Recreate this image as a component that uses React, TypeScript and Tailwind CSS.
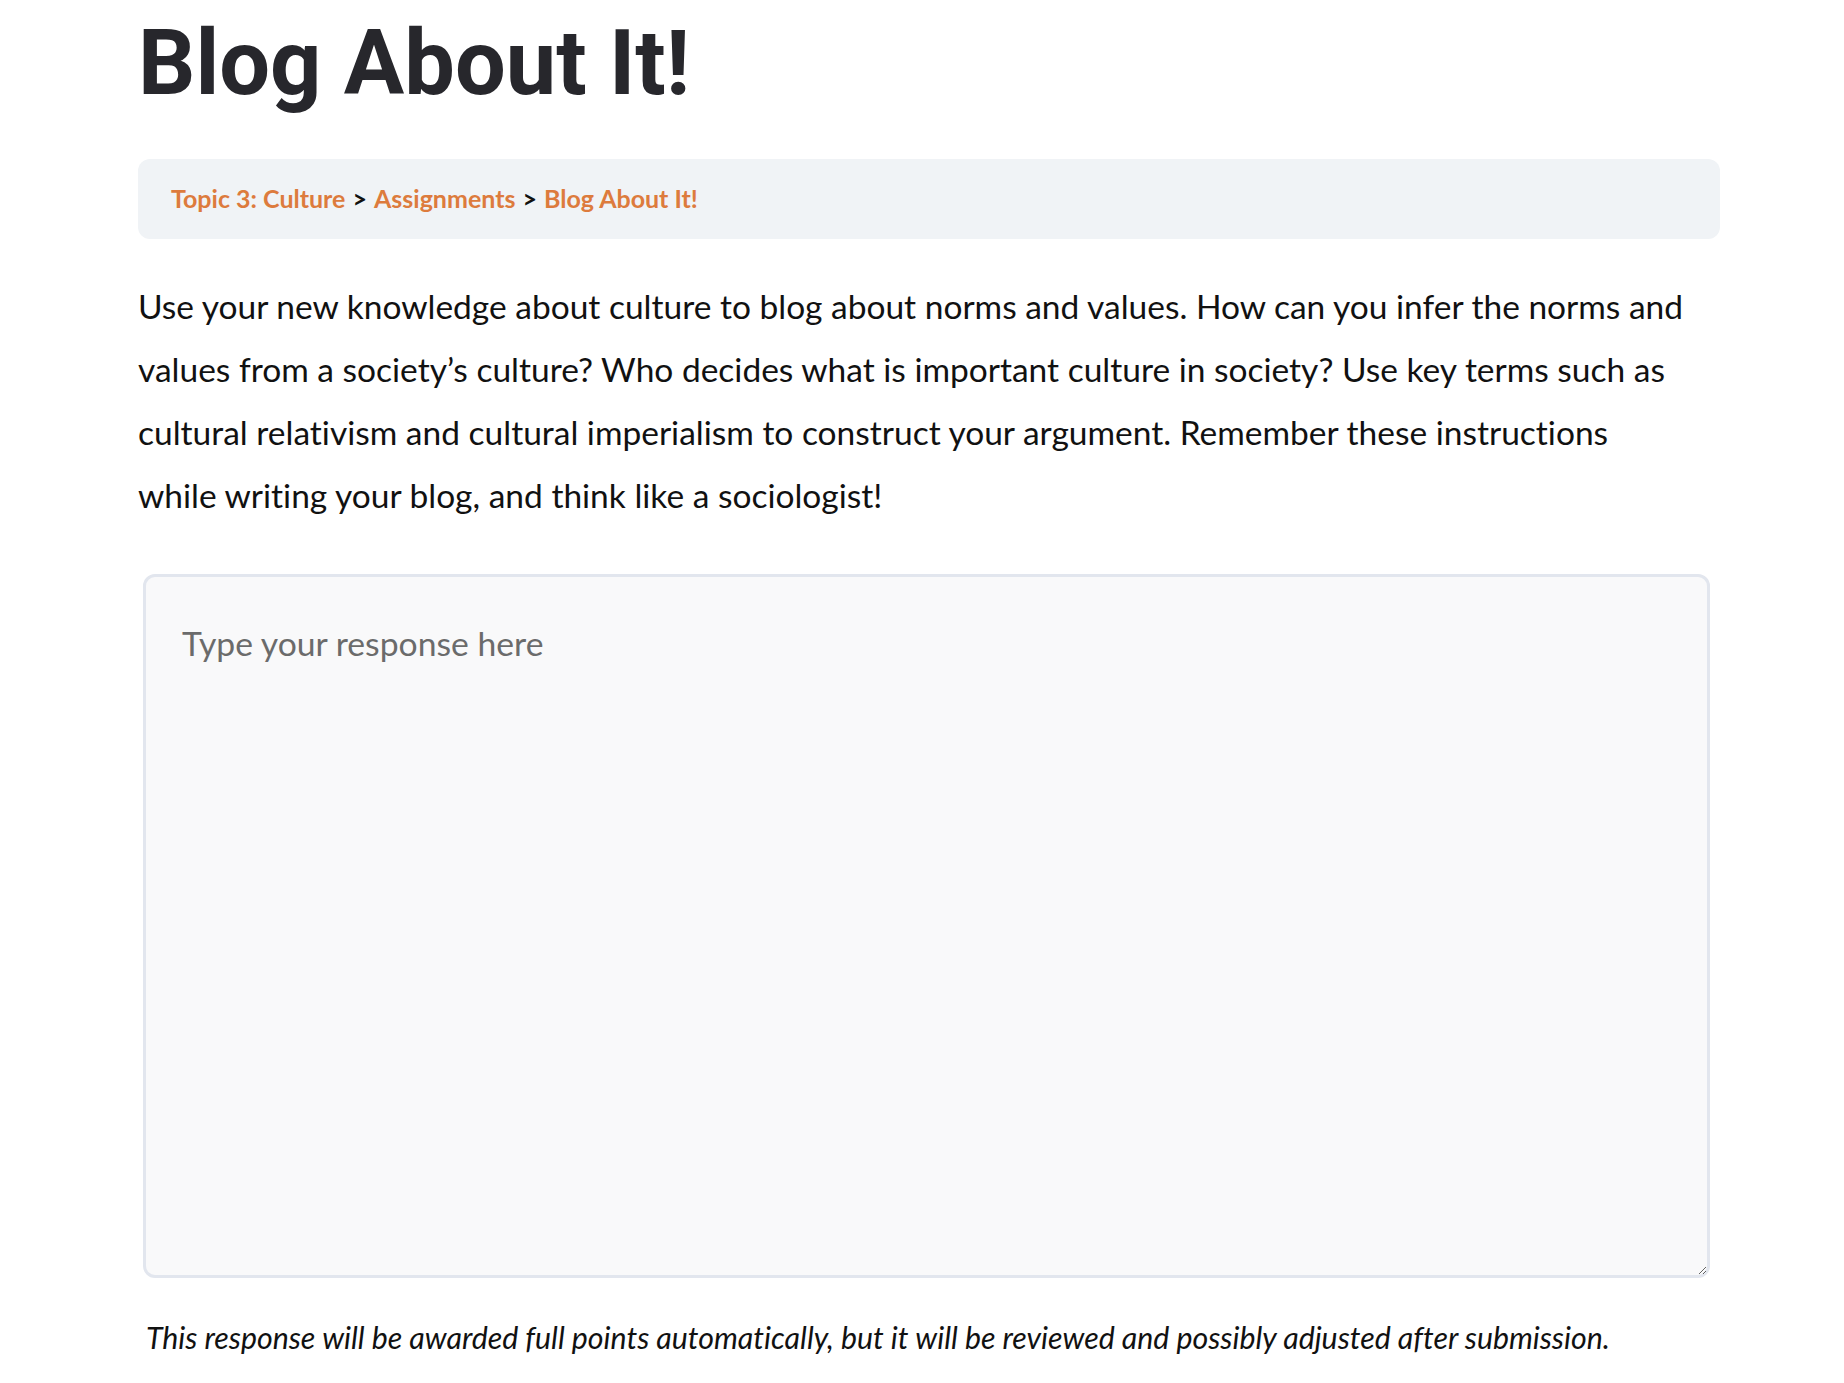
export default function App() {
  return (
    <div
      className="min-h-[1383px] bg-white [font-variant-ligatures:no-common-ligatures]"
      style={{ fontFamily: "Lato, 'Noto Sans', sans-serif" }}
    >
      <div className="ml-[138px] w-[1582px]">
        <h1
          className="pt-[10px] text-[90px] leading-[1.2] font-bold text-[#27272c]"
          style={{ fontFamily: "Roboto, 'Liberation Sans', sans-serif" }}
        >
          Blog About It!
        </h1>

        <nav className="mt-[41px] flex h-[80px] items-center rounded-[12px] bg-[#f0f3f6] pl-[33px] text-[25px] font-bold">
          <a className="text-[#dd7b3d]">Topic 3: Culture</a>
          <span className="mx-[7px] text-[#111]">&gt;</span>
          <a className="text-[#dd7b3d]">Assignments</a>
          <span className="mx-[7px] text-[#111]">&gt;</span>
          <a className="text-[#dd7b3d]">Blog About It!</a>
        </nav>

        <p className="mt-[36px] text-[33.5px] leading-[63px] text-[#111]">
          Use your new knowledge about culture to blog about norms and values. How can you infer the norms and
          <br />
          values from a society’s culture? Who decides what is important culture in society? Use key terms such as
          <br />
          cultural relativism and cultural imperialism to construct your argument. Remember these instructions
          <br />
          while writing your blog, and think like a sociologist!
        </p>

        <textarea
          placeholder="Type your response here"
          className="mt-[47px] ml-[5px] block h-[704px] w-[1567px] resize-y rounded-[12px] border-[3px] border-[#e2e6ee] bg-[#f9f9fa] px-[36px] pt-[41px] text-[33.7px] text-[#111] placeholder:text-[#6b6b6b] outline-none"
        />

        <p className="mt-[37px] ml-[8px] text-[30.3px] italic text-[#111]">
          This response will be awarded full points automatically, but it will be reviewed and possibly adjusted after submission.
        </p>
      </div>
    </div>
  );
}
